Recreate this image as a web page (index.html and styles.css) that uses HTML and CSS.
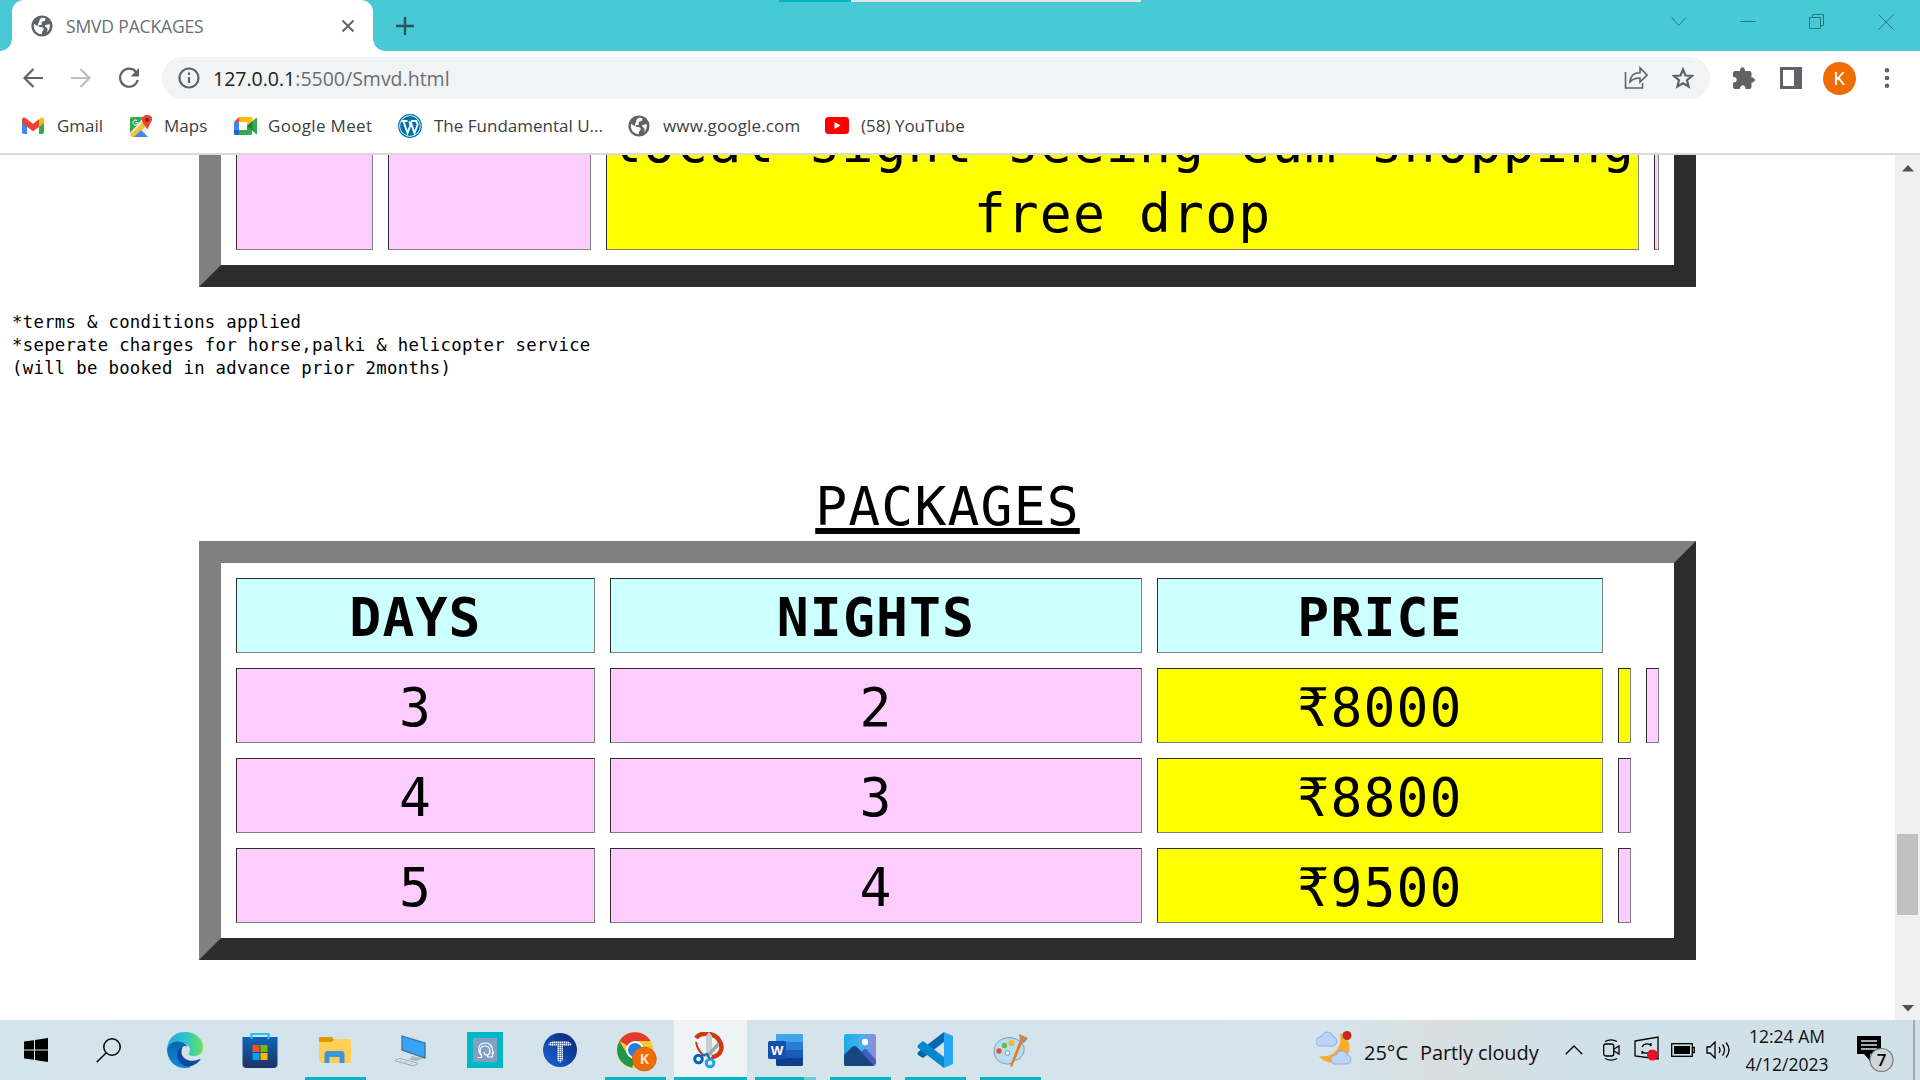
FILE: index.html
```html
<!DOCTYPE html>
<html lang="en">
<head>
<meta charset="utf-8">
<title>SMVD PACKAGES</title>
<link rel="stylesheet" href="styles.css">
</head>
<body>
<svg class="defs" width="0" height="0">
  <symbol id="globe" viewBox="0 0 22 22"><circle cx="11" cy="11" r="10.6" fill="#5f6368"/><path d="M11 2.800c2 0 3.200.4 3.200.4s.6 2-.7 2.700c-1 .5-2.600.3-2.900 1.300-.3 1 .8 1.600.1 2.300-.8.8-2.400.2-3 1-.5.8.2 1.300 1.300 1.400 1.600.1 3 .3 3.600 1.500.6 1.200-.7 1.900-1.300 2.800-.5.8-.5 2-.5 3-4.500-.2-8-3.800-8-8.200 0-.8.2-1.600.4-2.300l3.400 2.600.5-2.600c.2-1 1.400-1.200 1.200-2.600-.2-1 .7-2.300 2.700-3.300zM18.600 9c.8 3-.4 6.600-3 8.600.4-1.700 1.500-2.600.8-4-.7-1.300-2.900-1.600-2.400-3.100.4-1.200 2.400-.5 4.600-1.500z" fill="#fff"/></symbol>
</svg>
<header class="tabs">
  <div class="load-strip"><i></i></div>
  <div class="tab">
    <svg width="22" height="22"><use href="#globe"/></svg>
    <span class="tab-title">SMVD PACKAGES</span>
    <svg width="14" height="14" viewBox="0 0 14 14" stroke="#5f6368" stroke-width="2"><path d="M1.500 1.500l11 11M12.500 1.500l-11 11"/></svg>
  </div>
  <svg class="plus" width="18" height="18" viewBox="0 0 18 18" stroke="#2b5257" stroke-width="2.400"><path d="M9 0v18M0 9h18"/></svg>
  <div class="window-buttons">
    <svg width="16" height="16" viewBox="0 0 16 16"><path d="M.5 3.500l7.200 8L15 3.500"/></svg>
    <svg width="16" height="16" viewBox="0 0 16 16"><path d="M.5 7.500h15"/></svg>
    <svg width="16" height="16" viewBox="0 0 16 16"><path d="M.5 3.500h11v11H.5zM3.500 3.500v-3h11v11h-3"/></svg>
    <svg width="16" height="16" viewBox="0 0 16 16"><path d="M.5.5l15 15M15.500.5l-15 15"/></svg>
  </div>
</header>
<nav class="toolbar">
  <div class="nav-icons">
    <svg width="22" height="22" viewBox="0 0 22 22" class="line"><path d="M21 11H3M11.500 2L2.500 11l9 9"/></svg>
    <svg width="22" height="22" viewBox="0 0 22 22" class="line dim"><path d="M1 11h18M10.500 2l9 9-9 9"/></svg>
    <svg width="22" height="22" viewBox="0 0 22 22" class="line"><path d="M18.300 5.300A9 9 0 1 0 19.800 13"/><path d="M21 1v8.500h-8.500z" fill="#5f6368" stroke="none"/></svg>
  </div>
  <div class="omnibox">
    <svg width="22" height="22" viewBox="0 0 22 22" class="line"><circle cx="11" cy="11" r="9.500"/><path d="M11 10v6M11 5.500v2.400"/></svg>
    <span class="url"><b>127.0.0.1</b>:5500/Smvd.html</span>
    <svg width="24" height="24" viewBox="0 0 24 24" class="line thin"><path d="M1.500 6v16h17v-5M6 16c.3-6 4-9.200 10-9.200V2l7 7-7 7v-4c-4.500 0-7.500 1-10 4z"/></svg>
    <svg width="22" height="22" viewBox="0 0 22 22" class="line"><path d="M11 2.500l2.500 6 6.500.5-5 4.200 1.600 6.300L11 16.200l-5.600 3.300L7 13.200 2 9l6.500-.5z"/></svg>
  </div>
  <div class="extras">
    <svg width="22" height="22" viewBox="0 0 22 22"><path d="M7 4c0-5 5-5 5 0h4.500q2 0 2 2v4.500c4.500 0 4.500 5 0 5V20q0 2-2 2H12.500c.3-5-5.500-5-5.500 0H2q-2 0-2-2v-4.500c5 .5 5-6 0-5.500V6q0-2 2-2z" fill="#5f6368"/></svg>
    <svg width="22" height="22" viewBox="0 0 22 22"><path d="M0 0h22v22H0zM3 3v16h11V3z" fill="#5f6368" fill-rule="evenodd"/></svg>
    <span class="avatar">K</span>
    <svg width="6" height="22" viewBox="0 0 6 22" fill="#5f6368"><circle cx="3" cy="3.300" r="2.300"/><circle cx="3" cy="11" r="2.300"/><circle cx="3" cy="18.700" r="2.300"/></svg>
  </div>
</nav>
<div class="bookmarks">
  <a class="bm gmail"><svg width="22" height="17" viewBox="0 0 22 17"><path d="M0 2v13q0 2 2 2h3V6z" fill="#4285f4"/><path d="M22 2v13q0 2-2 2h-3V6z" fill="#34a853"/><path d="M17 2.500l2-1.700Q22-.5 22 2.500V6l-5 4z" fill="#fbbc04"/><path d="M0 3Q0-.5 3 .8l8 6 6-4.500V10l-6 4.300L0 6z" fill="#ea4335"/></svg><span>Gmail</span></a>
  <a class="bm maps"><svg width="22" height="22" viewBox="0 0 22 22"><path d="M0 4q0-2 2-2h14v18q0 2-2 2H2q-2 0-2-2z" fill="#e8eaed"/><path d="M0 4q0-2 2-2h12L0 18z" fill="#34a853"/><path d="M0 20L15 5l3 4L5 22H2z" fill="#fbc12d"/><path d="M4 22l7-7 7 7z" fill="#4285f4"/><path d="M17 0c7 0 5.500 6 3 9l-3 6c-.5-4-5-6-5-10 0-3 2-5 5-5z" fill="#ea4335"/><circle cx="17" cy="5" r="2" fill="#8c1d18"/><path d="M7 5.500a2.500 2.500 0 1 0 1 2H5.500" fill="none" stroke="#fff"/></svg><span>Maps</span></a>
  <a class="bm meet"><svg width="23" height="18" viewBox="0 0 23 18"><path d="M5 0h12q1.500 0 1.500 1.500V9H13V5H5z" fill="#fbbc04"/><path d="M0 5l5-5v5z" fill="#ea4335"/><path d="M0 5h5v8H0z" fill="#4285f4"/><path d="M0 13h5v5H1.500Q0 18 0 16.500z" fill="#1967d2"/><path d="M5 13h8V9l9-8q1-.5 1 .7v14.600q0 1.200-1 .7l-4-3.500v3q0 1.500-1.500 1.500H5z" fill="#34a853"/><path d="M13 9l5.500-4.500v9z" fill="#188038"/></svg><span>Google Meet</span></a>
  <a class="bm wp"><svg width="24" height="24" viewBox="0 0 24 24"><circle cx="12" cy="12" r="11.300" fill="#fff" stroke="#0073aa" stroke-width="1.200"/><circle cx="12" cy="12" r="10" fill="#0073aa"/><path d="M3.500 7h6M13 7h5M5.500 7.500l4 11.500 3-8-1.300-3.500M12.500 7.500l4 11.500 3-8c.5-2-2-3-1-5" fill="none" stroke="#fff" stroke-width="1.900"/></svg><span>The Fundamental U...</span></a>
  <a class="bm google"><svg width="22" height="22"><use href="#globe"/></svg><span>www.google.com</span></a>
  <a class="bm yt"><svg width="24" height="17" viewBox="0 0 24 17"><rect width="24" height="17" rx="3.500" fill="#f00"/><path d="M9.500 5v7l6-3.500z" fill="#fff"/></svg><span>(58) YouTube</span></a>
</div>
<div class="viewport">
  <main class="page">
    <div class="itinerary">
      <table class="board">
        <colgroup><col class="i1"><col class="i2"><col class="i3"><col class="i4"></colgroup>
        <tr><td></td><td></td><td class="hot">local sight seeing cum shopping<br>free drop</td><td></td></tr>
      </table>
    </div>
    <pre class="terms">*terms &amp; conditions applied
*seperate charges for horse,palki &amp; helicopter service
(will be booked in advance prior 2months)</pre>
    <table class="board prices">
      <caption>PACKAGES</caption>
      <colgroup><col class="p1"><col class="p2"><col class="p3"><col class="p4"><col class="p4"></colgroup>
      <tr><th>DAYS</th><th>NIGHTS</th><th>PRICE</th></tr>
      <tr><td>3</td><td>2</td><td class="hot">₹8000</td><td class="hot"></td><td></td></tr>
      <tr><td>4</td><td>3</td><td class="hot">₹8800</td><td></td></tr>
      <tr><td>5</td><td>4</td><td class="hot">₹9500</td><td></td></tr>
    </table>
  </main>
  <aside class="scrollbar">
    <svg width="12" height="7" viewBox="0 0 12 7"><path d="M0 6.500L6 0l6 6.500z" fill="#505050"/></svg>
    <i></i>
    <svg width="12" height="7" viewBox="0 0 12 7"><path d="M0 0h12L6 6.500z" fill="#505050"/></svg>
  </aside>
</div>
<footer class="taskbar">
  <span class="start"><svg width="24" height="24" viewBox="0 0 24 24"><path d="M0 3.500l10-1.300v9.300H0zM11 2l13-2v11.500H11zM0 12.500h10v9.300L0 20.500zM11 12.500h13V24l-13-2z"/></svg></span>
  <span class="search"><svg width="25" height="25" viewBox="0 0 25 25" fill="none" stroke="#000" stroke-width="1.500"><circle cx="16" cy="9" r="8.200"/><path d="M10 15L.7 24.300"/></svg></span>
  <span class="app"><svg width="36" height="36" viewBox="0 0 36 36">
    <defs><linearGradient id="e1"><stop offset="0" stop-color="#2aa9dc"/><stop offset=".5" stop-color="#2bc3d2"/><stop offset="1" stop-color="#68e455"/></linearGradient><linearGradient id="e2" x2="0" y2="1"><stop stop-color="#0d62ae"/><stop offset="1" stop-color="#0c8be0"/></linearGradient></defs>
    <path d="M0 17C1 6 8 0 18 0c11 0 18 7 18 15 0 6-4 9-9 9-4 0-6-1-5-3 2-3 1-9-7-10C8 9 2 12 0 17z" fill="url(#e1)"/><path d="M0 17C2 11 8 8 14 10c3 .8 6 3 7 5-5-3-10 2-8 9 2 7 8 9 11 11C12 39 0 31 0 17z" fill="url(#e2)"/><path d="M17 13.500c-8 3-9 13-3 18 6 6 15 2 19.500-4-.2-.8-.6-.5-2 .1-7 3-17 .2-17-7.600 0-3 1-5.500 2.500-6.500z" fill="#10499a"/></svg></span>
  <span class="app"><svg width="36" height="36" viewBox="0 0 36 36"><defs><linearGradient id="st" x2="0" y2="1"><stop stop-color="#0a66b8"/><stop offset="1" stop-color="#213263"/></linearGradient></defs><path d="M9.500 7V2h17v5" fill="none" stroke="#2cc2ee" stroke-width="2"/><path d="M.5 5h35v27q0 4-4 4h-27q-4 0-4-4z" fill="url(#st)"/><path d="M9.500 7V2h17v5" fill="none" stroke="#2cc2ee" stroke-width="2"/><path d="M10.500 13h7v7h-7z" fill="#f25022"/><path d="M18.500 13h7v7h-7z" fill="#7fba00"/><path d="M10.500 21h7v7h-7z" fill="#00a4ef"/><path d="M18.500 21h7v7h-7z" fill="#ffb900"/></svg></span>
  <span class="app open"><svg width="36" height="36" viewBox="0 0 36 36"><path d="M2 6q0-1 1-1h12l3 4v4H2z" fill="#dc9a00"/><path d="M2 10h12l4-3h14q2 0 2 2v20q0 2-2 2H4q-2 0-2-2z" fill="#ffd055"/><path d="M7.500 31V22q0-3 3-3h14q3 0 3 3v9h-5v-6h-10v6z" fill="#3c94dc"/></svg></span>
  <span class="app"><svg width="36" height="36" viewBox="0 0 36 36"><path d="M10 4l23 7v15L10 18z" fill="#36a3f5" stroke="#456e92" stroke-width="1.300"/><path d="M20 24l7 2-1 3-7-3zM15 27l11-2 5 2-8 2z" fill="#aab8c2"/><path d="M8 26.500l18 5-5 2.500-18-5.500z" fill="#f6f8f9" stroke="#8d999f" stroke-width=".8"/><path d="M8 28.500l15 4M6 29.500l15 4M11 27l-5 3M16 28.500l-4 3M21 30l-4 3" stroke="#a4adb2" stroke-width=".6"/></svg></span>
  <span class="app"><svg width="36" height="36" viewBox="0 0 36 36"><path d="M0 0h36v36H0z" fill="#00b7c3"/><path d="M6 6h24v24H6z" fill="#7f9fc4"/><g fill="none" stroke="#fff" stroke-width="1.200"><path d="M10.500 25.500h4v-2c-4-4-4-12 3-12.500 6-.3 8 4 8 7l1 3h-1v4h-5v-2"/><path d="M15 24c-3-3-3-10 3-10 5 0 6 5 4 8-2 2-5 1-5-2"/></g></svg></span>
  <span class="app"><svg width="36" height="36" viewBox="0 0 36 36"><defs><pattern id="dots" width="2" height="2" patternUnits="userSpaceOnUse"><path d="M0 0h1.500v1.500H0z" fill="#fff"/></pattern><linearGradient id="tg" x1="0" y1="1" x2="1" y2="0"><stop stop-color="#1a66d8"/><stop offset="1" stop-color="#0a2470"/></linearGradient></defs><circle cx="18" cy="18" r="17" fill="url(#tg)"/><path d="M6 12l4-3h16l4 3-2 2h-7v14l-3 3-3-3V14H8z" fill="url(#dots)"/></svg></span>
  <span class="app open"><svg width="40" height="40" viewBox="0 0 40 40" class="chrome"><circle cx="18" cy="18" r="18" fill="#fbc934"/><path d="M18 18L2.500 9a18 18 0 0 1 31-.0H18z" fill="#e33b2e"/><path d="M2.500 9l8 13.500L18 27l-3 8.800A18 18 0 0 1 2.500 9z" fill="#259645"/><circle cx="18" cy="18" r="9" fill="#fff"/><circle cx="18" cy="18" r="7" fill="#2a7de9"/><circle cx="27.300" cy="27" r="12" fill="#f06c00" stroke="#a66a36" stroke-width=".8"/><text x="27.300" y="32" text-anchor="middle" class="badge-k">K</text></svg></span>
  <span class="app active"><svg width="36" height="36" viewBox="0 0 36 36"><path d="M4 10c1 6 4 11 9 14" fill="none" stroke="#cd3b13" stroke-width="2"/><path d="M4 6c4-6 18-6 23 2 5 7 2 17-8 17" fill="none" stroke="#cd3b13" stroke-width="4.500"/><path d="M14 4l3-4 3 4v21l-6-3z" fill="#c9cdd0"/><path d="M26 10l1 4-11 12-3-2z" fill="#9fa6aa"/><circle cx="6.500" cy="27" r="3.800" fill="none" stroke="#0b62b5" stroke-width="3"/><circle cx="18" cy="31" r="3.800" fill="none" stroke="#24a0e6" stroke-width="3"/><path d="M9 24l6-2 3 5" fill="none" stroke="#136bb9" stroke-width="2"/></svg></span>
  <span class="app open stacked"><svg width="36" height="36" viewBox="0 0 36 36"><rect x="9" y="2" width="27" height="32" rx="2" fill="#1859b9"/><path d="M9 10V4q0-2 2-2h23q2 0 2 2v6z" fill="#41a5ee"/><path d="M9 10h27v8H9z" fill="#2b7cd3"/><path d="M9 26h27v6q0 2-2 2H11q-2 0-2-2z" fill="#103f91"/><rect x="1" y="9" width="18" height="18" rx="1.500" fill="#174fae"/><text x="10" y="22.500" text-anchor="middle" class="word-w">W</text></svg></span>
  <span class="app open"><svg width="36" height="36" viewBox="0 0 36 36"><defs><linearGradient id="ph"><stop stop-color="#1faae8"/><stop offset=".6" stop-color="#4cafee"/><stop offset="1" stop-color="#9a85d8"/></linearGradient></defs><rect x="2" y="2" width="32" height="32" rx="2" fill="url(#ph)"/><path d="M18 22q4-7 7-4l9 10v4l-6 2z" fill="#465bc2"/><path d="M2 23l8-8q3-2 5 0l17 19H4q-2 0-2-2z" fill="#174681"/><circle cx="23" cy="10" r="3.200" fill="#fff"/></svg></span>
  <span class="app open"><svg width="36" height="36" viewBox="0 0 36 36"><path d="M27 0v10L6 26l-5-3q-1-1.500 0-3z" fill="#0069ae"/><path d="M1 13l5-4 21 16v11L1 16q-1-1.500 0-3z" fill="#0687cf"/><path d="M27 0l9 4v28l-9 4z" fill="#25a7f2"/></svg></span>
  <span class="app open"><svg width="36" height="36" viewBox="0 0 36 36"><path d="M3 24C-1 13 9 4 20 6c12 2 16 12 8 20-3 3-5 1-7 4-3 4-15 2-18-6z" fill="#b9dcef" stroke="#719ebc"/><circle cx="15.500" cy="21" r="2.300" fill="#e6f1f7" stroke="#719ebc"/><circle cx="7" cy="19" r="2.700" fill="#e34b3d"/><circle cx="12.500" cy="13.500" r="2.700" fill="#63bd45"/><circle cx="19.500" cy="11" r="2.900" fill="#f9b51a"/><path d="M28 8l3 1-11 26-2-1z" fill="#e37b22"/><path d="M27 2l9 4-4 5-4-1z" fill="#bd8a5b"/></svg></span>
  <div class="tray">
    <svg class="weather" width="36" height="36" viewBox="0 0 36 36"><path d="M24 2c9 4 13 15 6 24-7 8-20 8-27-1 13 2 24-7 21-23z" fill="#f8ac2b"/><path d="M5 15q-5 0-5-4.500T5 6c2-7 12-6 12 0 5-1 5 9 0 9z" fill="#bdd3f5" stroke="#7fa4de" stroke-width=".8"/><path d="M19 33q-4 0-4-4.500t5-4.500c2-6 10-5 11 0 5 0 5 9 0 9z" fill="#bdd3f5" stroke="#7fa4de" stroke-width=".8"/><circle cx="31" cy="4.500" r="4.500" fill="#c42b1c"/></svg>
    <span class="temp">25°C</span><span class="sky">Partly cloudy</span>
    <svg class="chev" width="18" height="10" viewBox="0 0 18 10"><path d="M.7 9.200L9 1l8.300 8.200"/></svg>
    <svg class="cam" width="17" height="22" viewBox="0 0 17 22"><rect x=".7" y="5" width="10" height="12" rx="2"/><path d="M11 10l5-3v8l-5-3M2 2.500q6-3.300 12 0M2 19.500q6 3.300 12 0"/></svg>
    <svg class="sync" width="25" height="25" viewBox="0 0 25 25"><path d="M1 5l23-4v22L1 20zM8 11c2-4 8-4 9-1V7M17 14c-2 4-8 4-9 1v3"/><circle class="alert" cx="18.500" cy="19" r="5.500"/></svg>
    <svg class="bat" width="24" height="14" viewBox="0 0 24 14"><rect x=".7" y=".7" width="20.600" height="12.600"/><path d="M22 4.500h1.300v5H22"/><path d="M3 3h16v8H3z" fill="#000" stroke="none"/></svg>
    <svg class="vol" width="25" height="20" viewBox="0 0 25 20"><path d="M1 7h3l5-5v16l-5-5H1zM13 7q2 3 0 6M16.500 4.500q4 5.500 0 11M20 2.500q6 7.500 0 15"/></svg>
    <div class="clock"><span class="time">12:24 AM</span><span class="date">4/12/2023</span></div>
    <svg class="note" width="37" height="37" viewBox="0 0 37 37"><path d="M0 0h24v18H13v7l-6-7H0z"/><path d="M4 5h16M4 9h16M4 13h16" stroke="#d3e2e8" stroke-width="1.400"/><circle cx="24.500" cy="24" r="11.500" fill="#d0d5d8" stroke="#72797d" stroke-width="1.200"/><text x="24.500" y="30" text-anchor="middle" class="seven">7</text></svg>
  </div>
</footer>
</body>
</html>
```
FILE: styles.css
```css
* { box-sizing: border-box; }
body { margin: 0; width: 1920px; height: 1080px; overflow: hidden; display: flex; flex-direction: column; background: #fff; font-family: "Open Sans", "Noto Sans", sans-serif; }
svg { display: block; flex: none; }
span { white-space: nowrap; }
.defs { position: absolute; }

.tabs { position: relative; flex: none; height: 51px; display: flex; align-items: center; background: #48cad6; padding-left: 12px; }
.load-strip { position: absolute; left: 779px; top: 0; width: 362px; height: 2px; background: #e3e3e3; }
.load-strip i { display: block; width: 72px; height: 2px; background: #00b7c3; }
.tab { position: relative; width: 361px; height: 51px; display: flex; align-items: center; background: #fff; border-radius: 12px 12px 0 0; padding: 0 18px 0 19px; }
.tab::before, .tab::after { content: ""; position: absolute; bottom: 0; width: 12px; height: 12px; }
.tab::before { left: -12px; background: radial-gradient(circle at 0 0, transparent 11.500px, #fff 12px); }
.tab::after { right: -12px; background: radial-gradient(circle at 100% 0, transparent 11.500px, #fff 12px); }
.tab-title { flex: 1; margin-left: 13px; font-size: 17.500px; letter-spacing: -.25px; color: #6a6e73; }
.tab-title { font-size: 17.500px; letter-spacing: -.15px; }
.plus { margin-left: 23px; }
.window-buttons { display: flex; gap: 53px; margin-left: auto; padding: 0 26px 8px 0; }
.window-buttons svg { fill: none; stroke: #2b777e; }

.line { fill: none; stroke: #5f6368; stroke-width: 2.200; }
.dim { stroke: #bcbec1; }
.thin { stroke-width: 1.600; }
.toolbar { flex: none; height: 54px; display: flex; align-items: center; }
.nav-icons { display: flex; gap: 26px; width: 162px; padding-left: 22px; }
.omnibox { width: 1548px; height: 42px; border-radius: 21px; background: #f1f3f4; display: flex; align-items: center; padding: 0 16px 0 16px; }
.url { flex: 1; margin-left: 13px; font-size: 19.500px; color: #6a6e73; }
.url b { font-weight: 400; color: #202124; }
.omnibox .thin { margin-right: 24px; }
.extras { display: flex; align-items: center; padding-left: 23px; }
.extras svg + svg { margin-left: 25px; }
.avatar { width: 33px; height: 33px; margin: 0 28px 0 21px; border-radius: 50%; background: #ef6c00; color: #fff; font: 18px/33px Roboto, sans-serif; text-align: center; }

.bookmarks { flex: none; height: 50px; display: flex; align-items: center; padding: 0 0 7px 22px; border-bottom: 2px solid #dadada; font-size: 17px; color: #3c4043; }
.bm { display: flex; align-items: center; flex: none; gap: 13px; height: 24px; }
.gmail { width: 108px; }
.maps { width: 104px; gap: 12px; }
.meet { width: 164px; gap: 11px; letter-spacing: .33px; }
.wp { width: 230px; gap: 12px; }
.google { width: 197px; letter-spacing: .14px; }
.yt { gap: 12px; }

.viewport { flex: none; height: 865px; display: flex; }
.page { width: 1895px; font-family: Consolas, "DejaVu Sans Mono", monospace; color: #000; }
.itinerary { height: 132px; overflow: hidden; display: flex; align-items: flex-end; }
.board { width: 1497px; margin-left: 199px; table-layout: fixed; border: 22px solid; border-color: #808080 #2c2c2c #2c2c2c #808080; border-spacing: 15px; font-size: 53px; line-height: 69px; letter-spacing: 1.160px; text-align: center; }
.itinerary .board { flex: none; line-height: 70px; }
.board th, .board td { height: 75px; padding: 4px 1px 0; border: 1px solid; border-color: #2c2c2c #808080 #808080 #2c2c2c; overflow: hidden; white-space: nowrap; background: #fcf; }
.board th { background: #cff; }
.board .hot { background: #ff0; }
.i1 { width: 137px; }
.i2 { width: 203px; }
.i3 { width: 1033px; }
.i4 { width: 5px; }
.p1 { width: 359px; }
.p2 { width: 532px; }
.p3 { width: 446px; }
.p4 { width: 13px; }
.terms { margin: 24px 0 0 12px; height: 159px; font-family: inherit; font-size: 17.300px; line-height: 23px; letter-spacing: .31px; }
.prices caption { height: 71px; padding-top: 3px; line-height: 68px; text-decoration: underline; text-decoration-thickness: 6px; text-underline-offset: 3px; text-decoration-skip-ink: none; }
.scrollbar { width: 25px; background: #f0f0f0; display: flex; flex-direction: column; align-items: center; padding: 10px 0 8px; }
.scrollbar i { width: 21px; height: 81px; margin: 662px 0 auto; background: #c1c1c1; }

.taskbar { flex: none; height: 60px; display: flex; background: linear-gradient(90deg, #d4e4eb 0, #d5e3ea 70%, #d9dfe1 75%, #d0e1e9 82%, #cfe0e6 100%); }
.start, .search, .app { display: flex; align-items: center; justify-content: center; height: 60px; }
.start { width: 72px; }
.search { width: 75px; padding-right: 3px; }
.app { width: 75px; flex: none; }
.open { background: linear-gradient(#00b7c3, #00b7c3) 8px 57px / 61px 3px no-repeat; }
.stacked { background: linear-gradient(90deg, #00b7c3 49px, #62d1d8 49px) 8px 57px / 61px 3px no-repeat; }
.active { background: linear-gradient(#00b7c3, #00b7c3) 2px 57px / 73px 3px no-repeat, linear-gradient(90deg, transparent 2px, #edf3f6 2px); }
.chrome { margin: 4px 0 0 4px; }
.badge-k { font: 700 14px "Open Sans", sans-serif; fill: #ffe6cc; }
.word-w { font: 700 13px "Open Sans", sans-serif; fill: #fff; }
.tray { flex: 1; margin-left: 269px; display: flex; align-items: center; border-right: 2px solid #9eadb4; margin-right: 5px; color: #101010; }
.tray svg { fill: none; stroke: #000; stroke-width: 1.300; }
.tray .weather { stroke: none; margin-bottom: 3px; }
.temp, .sky { font-size: 20px; padding-top: 5px; }
.temp { margin-left: 12px; width: 56px; }
.sky { width: 145px; letter-spacing: -.1px; }
.tray .cam { margin-left: 20px; }
.tray .sync { margin: 0 0 3px 14px; }
.tray .alert { fill: #e81123; stroke: none; }
.tray .bat { margin-left: 12px; }
.tray .vol { margin-left: 11px; }
.clock { width: 100px; margin: 0 20px 0 6px; display: flex; flex-direction: column; align-items: center; font-size: 17.500px; line-height: 28px; }
.tray .note { fill: #000; stroke: none; margin: 8px 0 0; }
.seven { font: 600 17px "Open Sans", sans-serif; fill: #000; }
```
